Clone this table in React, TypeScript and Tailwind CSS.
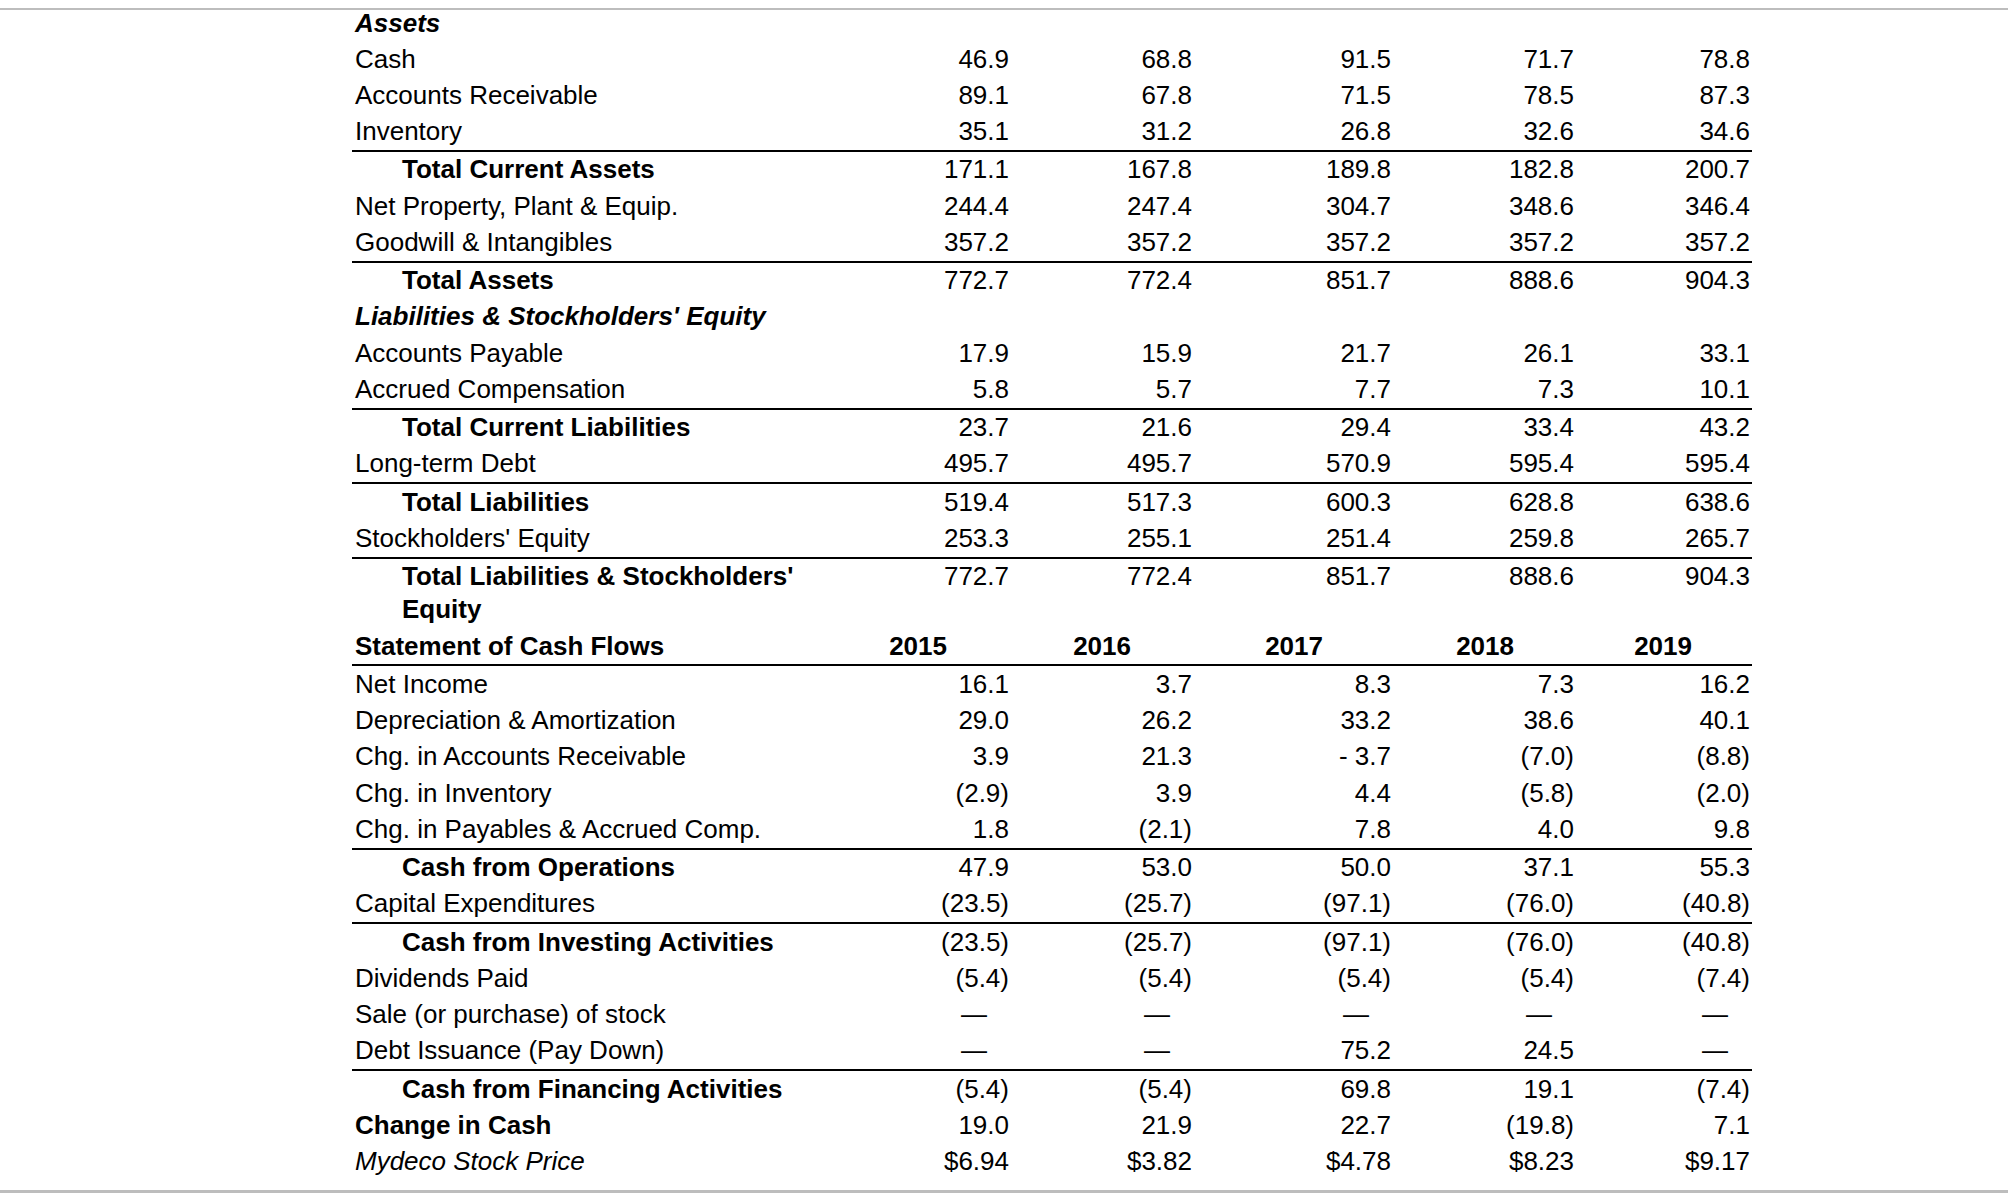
import React from "react";

type RowKind = "plain" | "section" | "total" | "bold" | "italic" | "years";

interface Row {
    label: string;
    vals?: string[];
    kind?: RowKind;
    line?: boolean;
}

const D = "—";

const rows: Row[] = [
    { label: "Cash", vals: ["46.9", "68.8", "91.5", "71.7", "78.8"] },
    { label: "Accounts Receivable", vals: ["89.1", "67.8", "71.5", "78.5", "87.3"] },
    { label: "Inventory", vals: ["35.1", "31.2", "26.8", "32.6", "34.6"] },
    { label: "Total Current Assets", vals: ["171.1", "167.8", "189.8", "182.8", "200.7"], kind: "total", line: true },
    { label: "Net Property, Plant & Equip.", vals: ["244.4", "247.4", "304.7", "348.6", "346.4"] },
    { label: "Goodwill & Intangibles", vals: ["357.2", "357.2", "357.2", "357.2", "357.2"] },
    { label: "Total Assets", vals: ["772.7", "772.4", "851.7", "888.6", "904.3"], kind: "total", line: true },
    { label: "Liabilities & Stockholders' Equity", kind: "section" },
    { label: "Accounts Payable", vals: ["17.9", "15.9", "21.7", "26.1", "33.1"] },
    { label: "Accrued Compensation", vals: ["5.8", "5.7", "7.7", "7.3", "10.1"] },
    { label: "Total Current Liabilities", vals: ["23.7", "21.6", "29.4", "33.4", "43.2"], kind: "total", line: true },
    { label: "Long-term Debt", vals: ["495.7", "495.7", "570.9", "595.4", "595.4"] },
    { label: "Total Liabilities", vals: ["519.4", "517.3", "600.3", "628.8", "638.6"], kind: "total", line: true },
    { label: "Stockholders' Equity", vals: ["253.3", "255.1", "251.4", "259.8", "265.7"] },
    { label: "Total Liabilities & Stockholders' Equity", vals: ["772.7", "772.4", "851.7", "888.6", "904.3"], kind: "total", line: true },
    { label: "Statement of Cash Flows", vals: ["2015", "2016", "2017", "2018", "2019"], kind: "years" },
    { label: "Net Income", vals: ["16.1", "3.7", "8.3", "7.3", "16.2"], line: true },
    { label: "Depreciation & Amortization", vals: ["29.0", "26.2", "33.2", "38.6", "40.1"] },
    { label: "Chg. in Accounts Receivable", vals: ["3.9", "21.3", "- 3.7", "(7.0)", "(8.8)"] },
    { label: "Chg. in Inventory", vals: ["(2.9)", "3.9", "4.4", "(5.8)", "(2.0)"] },
    { label: "Chg. in Payables & Accrued Comp.", vals: ["1.8", "(2.1)", "7.8", "4.0", "9.8"] },
    { label: "Cash from Operations", vals: ["47.9", "53.0", "50.0", "37.1", "55.3"], kind: "total", line: true },
    { label: "Capital Expenditures", vals: ["(23.5)", "(25.7)", "(97.1)", "(76.0)", "(40.8)"] },
    { label: "Cash from Investing Activities", vals: ["(23.5)", "(25.7)", "(97.1)", "(76.0)", "(40.8)"], kind: "total", line: true },
    { label: "Dividends Paid", vals: ["(5.4)", "(5.4)", "(5.4)", "(5.4)", "(7.4)"] },
    { label: "Sale (or purchase) of stock", vals: [D, D, D, D, D] },
    { label: "Debt Issuance (Pay Down)", vals: [D, D, "75.2", "24.5", D] },
    { label: "Cash from Financing Activities", vals: ["(5.4)", "(5.4)", "69.8", "19.1", "(7.4)"], kind: "total", line: true },
    { label: "Change in Cash", vals: ["19.0", "21.9", "22.7", "(19.8)", "7.1"], kind: "bold" },
    { label: "Mydeco Stock Price", vals: ["$6.94", "$3.82", "$4.78", "$8.23", "$9.17"], kind: "italic" },
];

// the year headings sit a little left of each number column
const yearPad = ["pr-[64px]", "pr-[63px]", "pr-[70px]", "pr-[62px]", "pr-[60px]"];

function labelClass(kind: RowKind) {
    switch (kind) {
        case "section":
            return "pl-[3px] font-bold italic";
        case "total":
            return "pl-[50px] font-bold";
        case "bold":
        case "years":
            return "pl-[3px] font-bold";
        case "italic":
            return "pl-[3px] italic";
        default:
            return "pl-[3px]";
    }
}

function TableRow({ row }: { row: Row }) {
    const kind = row.kind ?? "plain";
    return (
        <div
            className={`col-span-6 grid grid-cols-subgrid ${row.line ? "border-t-2 border-black" : ""}`}
        >
            <div className={`py-[1.5px] pr-2 ${labelClass(kind)}`}>{row.label}</div>
            {(row.vals ?? ["", "", "", "", ""]).map((v, i) => (
                <div
                    key={i}
                    className={`py-[1.5px] text-right ${
                        kind === "years"
                            ? `font-bold ${yearPad[i]}`
                            : v === D
                              ? "pr-[24px]"
                              : "pr-[2px]"
                    }`}
                >
                    {v}
                </div>
            ))}
        </div>
    );
}

export default function App() {
    return (
        <div className="w-[2008px] h-[1196px] bg-white overflow-hidden font-['Liberation_Sans',Arial,sans-serif] text-[26px] leading-[33.25px] text-black">
            <div className="mt-[8px] h-[2px] bg-[#bdbdbd]" />
            <div className="ml-[352px] w-[1400px]">
                <div className="h-[31px] pl-[3px] leading-[27px] font-bold italic">Assets</div>
                <div className="grid grid-cols-[480px_179px_183px_199px_183px_176px]">
                    {rows.map((r) => (
                        <TableRow key={r.label} row={r} />
                    ))}
                </div>
            </div>
            <div className="mt-[10px] h-[3px] bg-[#bdbdbd]" />
        </div>
    );
}
